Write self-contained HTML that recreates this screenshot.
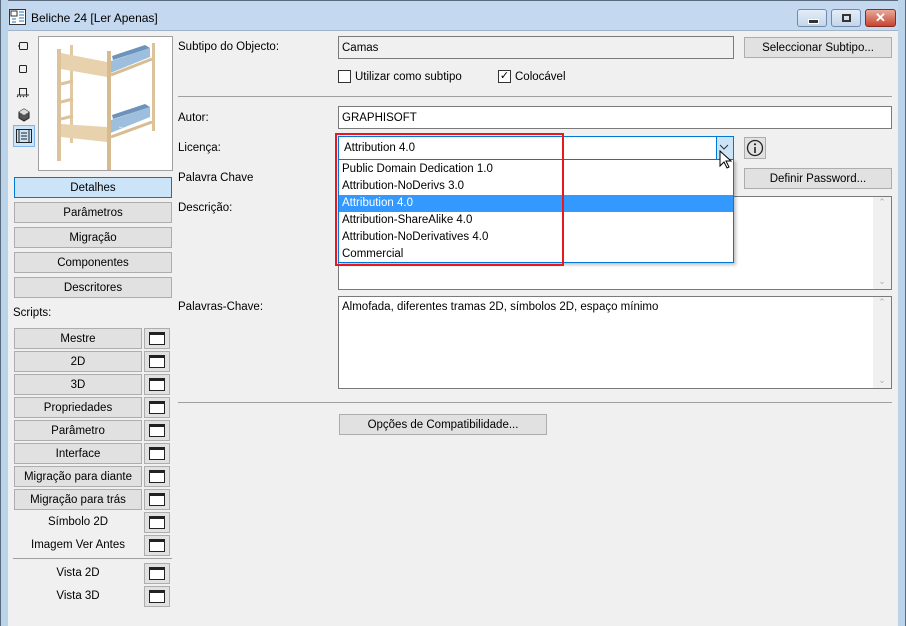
<!DOCTYPE html>
<html><head><meta charset="utf-8"><style>
*{box-sizing:border-box;margin:0;padding:0}
body{width:906px;height:626px;overflow:hidden;background:#f0f0f0;font-family:"Liberation Sans",sans-serif;font-size:11.5px;color:#000;position:relative}
.a{position:absolute}
.btn{position:absolute;background:#e1e1e1;border:1px solid #adadad;text-align:center;line-height:20px;white-space:nowrap}
.ib{position:absolute;width:26px;height:21px;background:#e1e1e1;border:1px solid #adadad}
.ib:after{content:"";position:absolute;left:4px;top:3px;width:16px;height:13px;border:1px solid #222;border-top-width:3px;background:#fff;box-sizing:border-box}
.fld{position:absolute;background:#fff;border:1px solid #7a7a7a}
.lbl{position:absolute;white-space:nowrap}
.sep{position:absolute;height:1px;background:#a0a0a0}
.li{position:absolute;left:0;width:394px;height:17px;line-height:17px;padding-left:3px;white-space:nowrap}
</style></head><body>
<!-- frame -->
<div class="a" style="left:0;top:0;width:906px;height:31px;background:#c4d9ef;border-top:1px solid #5a6b7d;border-left:1px solid #5a6b7d;border-right:1px solid #5a6b7d"></div>
<div class="a" style="left:0;top:0;width:8px;height:626px;background:#bcd4ea;border-left:1px solid #5a6b7d"></div>
<div class="a" style="left:898px;top:0;width:8px;height:626px;background:#bcd4ea;border-right:1px solid #5a6b7d"></div>
<div class="a" style="left:8px;top:30px;width:890px;height:1px;background:#9fb4c9"></div>
<svg class="a" style="left:9px;top:9px" width="17" height="16"><rect x=".5" y=".5" width="16" height="15" fill="#fff" stroke="#333"/><rect x="2" y="2" width="6" height="5" fill="none" stroke="#333"/><path d="M3 10h4M3 13h4M10 3h5M10 6h5M10 9h5M10 12h5" stroke="#2a6fb8"/></svg>
<div class="lbl" style="left:31px;top:11px;font-size:12px">Beliche 24 [Ler Apenas]</div>
<div class="a" style="left:797px;top:9px;width:30px;height:18px;border:1px solid #6e8bab;border-radius:3px;background:linear-gradient(#e4edf7,#c4d6ea)"><div class="a" style="left:10px;top:9px;width:9px;height:3px;background:#333;border:1px solid #fff;box-sizing:content-box"></div></div>
<div class="a" style="left:831px;top:9px;width:30px;height:18px;border:1px solid #6e8bab;border-radius:3px;background:linear-gradient(#e4edf7,#c4d6ea)"><div class="a" style="left:10px;top:4px;width:9px;height:8px;border:2px solid #333"></div></div>
<div class="a" style="left:865px;top:9px;width:31px;height:18px;border:1px solid #8a2b20;border-radius:3px;background:linear-gradient(#e9a99a,#c7452f);color:#fff;font-weight:bold;text-align:center;line-height:16px;font-size:13px">✕</div>

<!-- left icons -->
<svg class="a" style="left:14px;top:38px" width="22" height="110">
<rect x="5.5" y="4.5" width="8" height="7" rx="1" fill="none" stroke="#222"/><path d="M5 8h-1" stroke="#222"/>
<rect x="5.5" y="27.5" width="7" height="7" rx="1" fill="none" stroke="#222"/>
<path d="M5.5 57V50.5h7V57M3 57h12" fill="none" stroke="#222"/><path d="M3 59l1-1M6 59l1-1M9 59l1-1M12 59l1-1" stroke="#222"/>
<path d="M5 74l5-3 5 3v6l-5 3-5-3z" fill="#555" stroke="#222"/><path d="M5 74l5 3 5-3-5-3z" fill="#ddd"/>
</svg>
<div class="a" style="left:13px;top:125px;width:22px;height:22px;background:#cce4f7;border:1px solid #7eb4ea"></div>
<svg class="a" style="left:15px;top:128px" width="18" height="16"><rect x="1.5" y="1.5" width="15" height="13" fill="none" stroke="#222"/><path d="M4 2v12M14 2v12M6 5h6M6 8h6M6 11h6" stroke="#222"/></svg>

<!-- preview -->
<div class="a" style="left:38px;top:36px;width:135px;height:135px;background:#fff;border:1px solid #a0a0a0"></div>
<svg class="a" style="left:39px;top:37px" width="133" height="133">
<polygon points="69,25 111,11 111,20 69,37" fill="#9dbfdd"/>
<polygon points="73,19 106,8 111,11 74,23" fill="#6d93bb"/>
<polygon points="69,84 111,70 111,80 69,97" fill="#9dbfdd"/>
<polygon points="73,78 106,67 111,70 74,82" fill="#6d93bb"/>
<rect x="31" y="8" width="3" height="98" fill="#e1c9a3"/>
<rect x="113" y="6" width="3" height="88" fill="#dcc39c"/>
<rect x="18" y="12" width="4" height="112" fill="#dcc39c"/>
<rect x="68" y="14" width="4" height="119" fill="#d6ba90"/>
<polygon points="22,16 68,25 68,40 22,32" fill="#e8d2ae"/>
<polygon points="22,87 68,90 68,105 22,100" fill="#e8d2ae"/>
<path d="M72 38l41-16M72 100l41-15" stroke="#d8bd93" stroke-width="3"/>
<path d="M22 47l12-3M22 65l12-3M22 82l12-3" stroke="#dcc39c" stroke-width="3"/>
<path d="M80 90l4 1" stroke="#ddd"/>
</svg>

<!-- left buttons -->
<div class="btn" style="left:14px;top:177px;width:158px;height:21px;background:#cce4f7;border-color:#0078d7">Detalhes</div>
<div class="btn" style="left:14px;top:202px;width:158px;height:21px">Parâmetros</div>
<div class="btn" style="left:14px;top:227px;width:158px;height:21px">Migração</div>
<div class="btn" style="left:14px;top:252px;width:158px;height:21px">Componentes</div>
<div class="btn" style="left:14px;top:277px;width:158px;height:21px">Descritores</div>
<div class="lbl" style="left:13px;top:307px">Scripts:</div>

<div class="btn" style="left:14px;top:328px;width:128px;height:21px">Mestre</div><div class="ib" style="left:144px;top:328px"></div>
<div class="btn" style="left:14px;top:351px;width:128px;height:21px">2D</div><div class="ib" style="left:144px;top:351px"></div>
<div class="btn" style="left:14px;top:374px;width:128px;height:21px">3D</div><div class="ib" style="left:144px;top:374px"></div>
<div class="btn" style="left:14px;top:397px;width:128px;height:21px">Propriedades</div><div class="ib" style="left:144px;top:397px"></div>
<div class="btn" style="left:14px;top:420px;width:128px;height:21px">Parâmetro</div><div class="ib" style="left:144px;top:420px"></div>
<div class="btn" style="left:14px;top:443px;width:128px;height:21px">Interface</div><div class="ib" style="left:144px;top:443px"></div>
<div class="btn" style="left:14px;top:466px;width:128px;height:21px">Migração para diante</div><div class="ib" style="left:144px;top:466px"></div>
<div class="btn" style="left:14px;top:489px;width:128px;height:21px">Migração para trás</div><div class="ib" style="left:144px;top:489px"></div>
<div class="lbl" style="left:14px;top:516px;width:128px;text-align:center">Símbolo 2D</div><div class="ib" style="left:144px;top:512px"></div>
<div class="lbl" style="left:14px;top:539px;width:128px;text-align:center">Imagem Ver Antes</div><div class="ib" style="left:144px;top:535px"></div>
<div class="sep" style="left:13px;top:558px;width:159px"></div>
<div class="lbl" style="left:14px;top:567px;width:128px;text-align:center">Vista 2D</div><div class="ib" style="left:144px;top:563px"></div>
<div class="lbl" style="left:14px;top:590px;width:128px;text-align:center">Vista 3D</div><div class="ib" style="left:144px;top:586px"></div>

<!-- right -->
<div class="lbl" style="left:178px;top:41px">Subtipo do Objecto:</div>
<div class="fld" style="left:338px;top:36px;width:396px;height:23px;background:#f0f0f0;padding:5px 3px">Camas</div>
<div class="btn" style="left:744px;top:37px;width:148px;height:21px">Seleccionar Subtipo...</div>
<div class="a" style="left:338px;top:70px;width:13px;height:13px;border:1px solid #333;background:#fff"></div>
<div class="lbl" style="left:355px;top:71px">Utilizar como subtipo</div>
<div class="a" style="left:498px;top:70px;width:13px;height:13px;border:1px solid #333;background:#fff;font-size:11px;line-height:11px;text-align:center">✓</div>
<div class="lbl" style="left:515px;top:71px">Colocável</div>
<div class="sep" style="left:178px;top:96px;width:714px"></div>
<div class="lbl" style="left:178px;top:112px">Autor:</div>
<div class="fld" style="left:338px;top:106px;width:554px;height:23px;padding:5px 3px">GRAPHISOFT</div>
<div class="lbl" style="left:178px;top:142px">Licença:</div>
<div class="a" style="left:338px;top:136px;width:396px;height:24px;background:#fff;border:1px solid #0078d7;padding:5px 5px">Attribution 4.0</div>
<div class="a" style="left:716px;top:137px;width:17px;height:22px;background:#cce4f7;border-left:1px solid #0078d7"></div>
<svg class="a" style="left:719px;top:144px" width="10" height="6"><path d="M1 1l4 4 4-4" fill="none" stroke="#333"/></svg>
<div class="btn" style="left:744px;top:137px;width:22px;height:22px"></div>
<svg class="a" style="left:746px;top:139px" width="18" height="18"><circle cx="9" cy="9" r="7.5" fill="none" stroke="#222" stroke-width="1.3"/><circle cx="9" cy="5.3" r="1.1" fill="#222"/><path d="M9 8v6" stroke="#222" stroke-width="1.6"/></svg>
<div class="lbl" style="left:178px;top:172px">Palavra Chave</div>
<div class="btn" style="left:744px;top:168px;width:148px;height:21px">Definir Password...</div>
<div class="lbl" style="left:178px;top:202px">Descrição:</div>
<div class="fld" style="left:338px;top:196px;width:554px;height:94px"></div>
<div class="a" style="left:873px;top:197px;width:18px;height:92px;background:#f0f0f0;color:#b0b0b0;font-size:9px;text-align:center">⌃<div style="position:absolute;bottom:2px;width:18px">⌄</div></div>
<div class="lbl" style="left:178px;top:301px">Palavras-Chave:</div>
<div class="fld" style="left:338px;top:296px;width:554px;height:93px;padding:4px 3px">Almofada, diferentes tramas 2D, símbolos 2D, espaço mínimo</div>
<div class="a" style="left:873px;top:297px;width:18px;height:91px;background:#f0f0f0;color:#b0b0b0;font-size:9px;text-align:center">⌃<div style="position:absolute;bottom:2px;width:18px">⌄</div></div>
<div class="sep" style="left:178px;top:402px;width:714px"></div>
<div class="btn" style="left:339px;top:414px;width:208px;height:21px">Opções de Compatibilidade...</div>

<!-- dropdown -->
<div class="a" style="left:338px;top:159px;width:396px;height:104px;background:#fff;border:1px solid #0078d7;box-shadow:2px 2px 3px rgba(0,0,0,.25)">
<div class="li" style="top:1px">Public Domain Dedication 1.0</div>
<div class="li" style="top:18px">Attribution-NoDerivs 3.0</div>
<div class="li" style="top:35px;background:#3399ff;color:#fff">Attribution 4.0</div>
<div class="li" style="top:52px">Attribution-ShareAlike 4.0</div>
<div class="li" style="top:69px">Attribution-NoDerivatives 4.0</div>
<div class="li" style="top:86px">Commercial</div>
</div>
<div class="a" style="left:335px;top:133px;width:229px;height:133px;border:2px solid #e8191e"></div>
<svg class="a" style="left:719px;top:150px" width="14" height="22"><path d="M1 1v15l4-4 3 6 2-1-3-6h5z" fill="#fff" stroke="#000"/></svg>
</body></html>
